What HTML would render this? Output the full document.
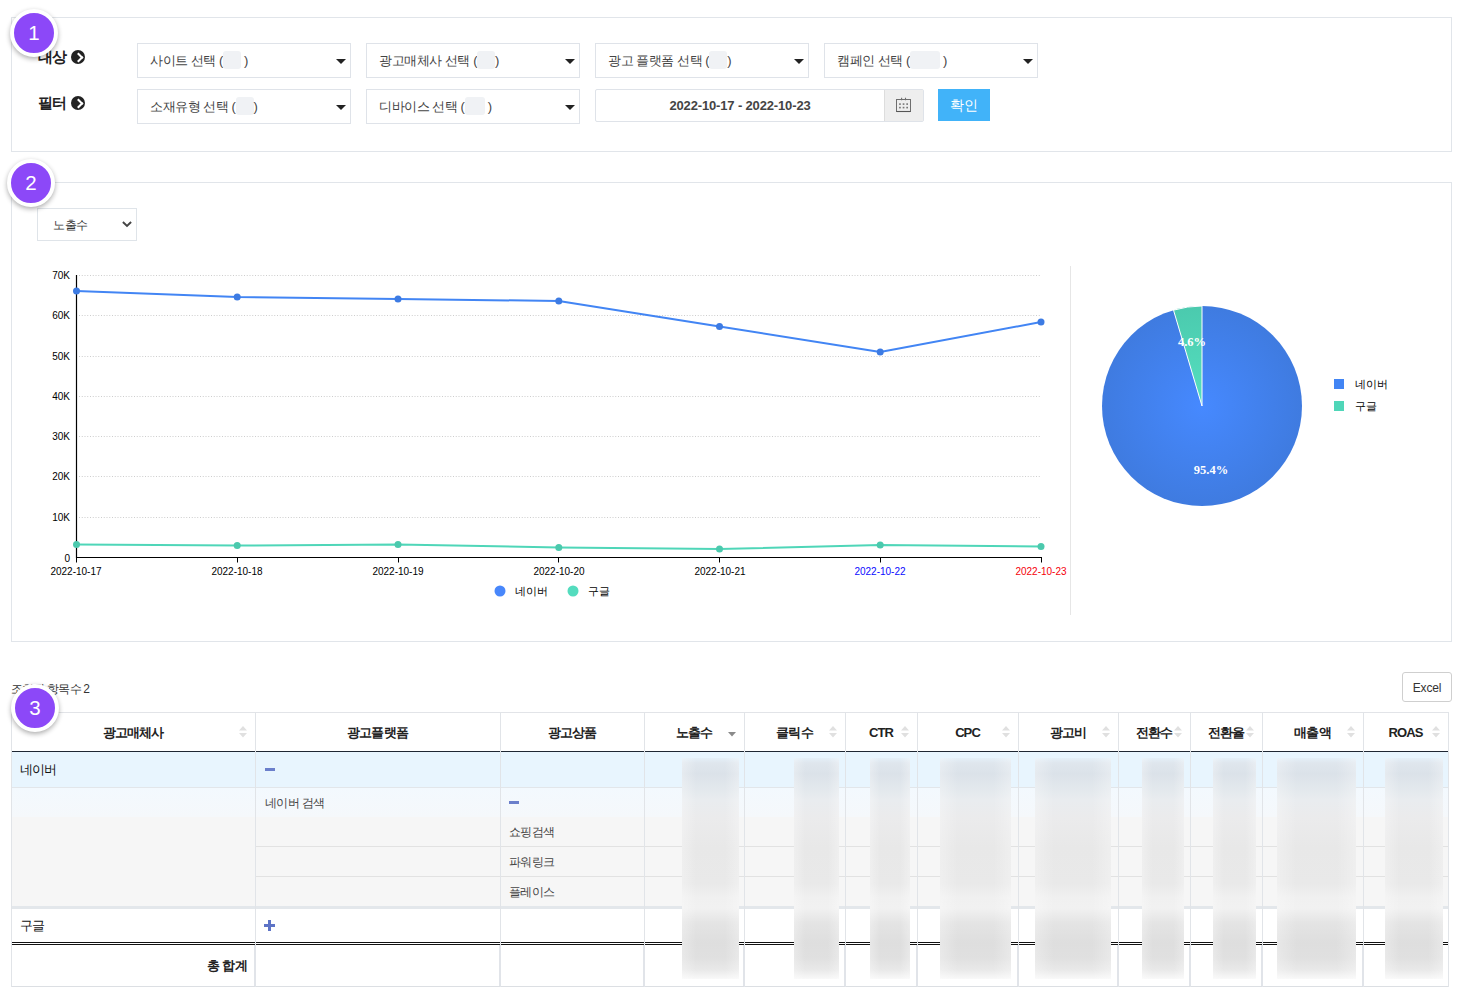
<!DOCTYPE html>
<html>
<head>
<meta charset="utf-8">
<title>광고 리포트</title>
<style>
*{box-sizing:border-box;margin:0;padding:0}
html,body{width:1459px;height:1000px;overflow:hidden;background:#fff}
body{position:relative;font-family:"Liberation Sans",sans-serif;color:#333;font-size:13px}
.abs{position:absolute}
.panel{position:absolute;left:11px;width:1441px;border:1px solid #e1e5ea;background:#fff}
.badge{position:absolute;width:48px;height:48px;border-radius:50%;background:#8c48f8;border:4px solid #fff;box-shadow:0 2px 5px rgba(0,0,0,.32);color:#fff;font-size:20.5px;line-height:40px;text-align:center;z-index:20}
.lbl{position:absolute;left:38px;font-weight:bold;font-size:15px;color:#222;line-height:18px;white-space:nowrap}
.lbl{letter-spacing:-.8px}
.lbl i{position:absolute;left:33px;top:2px;width:14px;height:14px;border-radius:50%;background:#222}
.lbl i:after{content:"";position:absolute;left:3.5px;top:3.7px;width:5px;height:5px;border-top:2px solid #fff;border-right:2px solid #fff;transform:rotate(45deg)}
.sel{position:absolute;width:214px;height:35px;border:1px solid #dfe3e9;background:#fff;font-size:13px;line-height:33px;padding-left:12px;color:#444;white-space:nowrap;letter-spacing:-.45px}
.sel:after{content:"";position:absolute;right:4px;top:15px;border-left:5px solid transparent;border-right:5px solid transparent;border-top:5px solid #222}
.sel b{display:inline-block;height:18px;vertical-align:-4px;background:#f0f2f5;border-radius:3px;font-weight:normal}
/*TBLCSS_S*/
.th{position:absolute;top:724px;height:18px;line-height:18px;font-weight:bold;font-size:13px;color:#222;text-align:center;white-space:nowrap;letter-spacing:-.9px}
.td{position:absolute;font-size:12px;line-height:18px;color:#444;white-space:nowrap;letter-spacing:-.6px}
.blob{position:absolute;top:758px;height:221px;overflow:hidden;background:
linear-gradient(to right,rgba(255,255,255,.3),rgba(255,255,255,0) 25%,rgba(255,255,255,0) 75%,rgba(255,255,255,.3)),
linear-gradient(to bottom,rgba(226,236,245,.6) 0,#dfe6ed 5px,#dbe2e9 16px,#e1e7ec 28px,#e9ecef 42px,#ebebec 60px,#e8e8e8 90px,#e9e9e9 125px,#f0f0f0 140px,#f1f1f1 150px,#e4e4e4 165px,#dedede 185px,#e0e0e0 200px,#e9e9e9 212px,rgba(245,245,245,.6) 221px)}
/*TBLCSS_E*/
</style>
</head>
<body>

<!-- ============ 1. filter panel ============ -->
<div class="panel" style="top:17px;height:135px"></div>
<div class="badge" style="left:10px;top:9px">1</div>

<div class="lbl" style="top:48px">대상<i></i></div>
<div class="lbl" style="top:94px">필터<i></i></div>

<div class="sel" style="left:137px;top:43px">사이트 선택 (<b style="width:18px"></b> )</div>
<div class="sel" style="left:366px;top:43px">광고매체사 선택 (<b style="width:18px"></b>)</div>
<div class="sel" style="left:595px;top:43px">광고 플랫폼 선택 (<b style="width:18px"></b>)</div>
<div class="sel" style="left:824px;top:43px">캠페인 선택 (<b style="width:30px"></b> )</div>
<div class="sel" style="left:137px;top:89px">소재유형 선택 (<b style="width:18px"></b>)</div>
<div class="sel" style="left:366px;top:89px">디바이스 선택 (<b style="width:20px"></b> )</div>

<div class="abs" style="left:595px;top:89px;width:329px;height:33px;border:1px solid #dfe3e9;border-radius:2px;background:#fff"></div>
<div class="abs" style="left:595px;top:89px;width:290px;height:33px;line-height:33px;text-align:center;font-weight:bold;font-size:13px;color:#444;letter-spacing:-0.15px">2022-10-17 - 2022-10-23</div>
<div class="abs" style="left:884px;top:90px;width:39px;height:31px;background:#eee;border-left:1px solid #ddd"></div>
<svg class="abs" style="left:895px;top:96px" width="17" height="17" viewBox="0 0 17 17" fill="none" stroke="#6e6e6e" stroke-width="1"><rect x="1.5" y="3.5" width="14" height="12"/><path d="M1.5 15.5h14" stroke="#555" stroke-width="1.1"/><path d="M6.6 1.8v2.4M10.5 1.8v2.4" stroke-width="1.1"/><g fill="#777" stroke="none"><rect x="4.1" y="7.3" width="1.7" height="1.6"/><rect x="7.7" y="7.3" width="1.7" height="1.6"/><rect x="11.3" y="7.3" width="1.7" height="1.6"/><rect x="4.1" y="10.8" width="1.7" height="1.6"/><rect x="7.7" y="10.8" width="1.7" height="1.6"/><rect x="11.3" y="10.8" width="1.7" height="1.6"/></g></svg>
<div class="abs" style="left:938px;top:89px;width:52px;height:32px;background:#41b3f9;color:#fff;font-size:14px;line-height:32px;text-align:center">확인</div>

<!-- ============ 2. chart panel ============ -->
<div class="panel" style="top:182px;height:460px"></div>
<div class="badge" style="left:7px;top:159px">2</div>

<!--CHART_S-->
<div class="abs" style="left:37px;top:208px;width:100px;height:33px;border:1px solid #dfe4e9;background:#fff;font-size:12px;line-height:33px;padding-left:15px;color:#333;letter-spacing:-.4px">노출수</div>
<svg class="abs" style="left:121px;top:220px" width="12" height="9" viewBox="0 0 12 9" fill="none" stroke="#444" stroke-width="1.9"><path d="M1.9 2 6 6l4.1-4"/></svg>
<svg class="abs" style="left:0;top:0" width="1459" height="1000" viewBox="0 0 1459 1000" font-family="Liberation Sans, sans-serif">
<line x1="79" x2="1041" y1="275.5" y2="275.5" stroke="#cdcdcd" stroke-width="1" stroke-dasharray="1 1.75"/>
<line x1="79" x2="1041" y1="315.5" y2="315.5" stroke="#cdcdcd" stroke-width="1" stroke-dasharray="1 1.75"/>
<line x1="79" x2="1041" y1="356.5" y2="356.5" stroke="#cdcdcd" stroke-width="1" stroke-dasharray="1 1.75"/>
<line x1="79" x2="1041" y1="396.5" y2="396.5" stroke="#cdcdcd" stroke-width="1" stroke-dasharray="1 1.75"/>
<line x1="79" x2="1041" y1="436.5" y2="436.5" stroke="#cdcdcd" stroke-width="1" stroke-dasharray="1 1.75"/>
<line x1="79" x2="1041" y1="476.5" y2="476.5" stroke="#cdcdcd" stroke-width="1" stroke-dasharray="1 1.75"/>
<line x1="79" x2="1041" y1="517.5" y2="517.5" stroke="#cdcdcd" stroke-width="1" stroke-dasharray="1 1.75"/>
<path d="M76.5 275V557.5H1041.5" fill="none" stroke="#000" stroke-width="1.2"/>
<line x1="76.5" x2="76.5" y1="557" y2="562.5" stroke="#000" stroke-width="1"/>
<line x1="237.5" x2="237.5" y1="557" y2="562.5" stroke="#000" stroke-width="1"/>
<line x1="398.5" x2="398.5" y1="557" y2="562.5" stroke="#000" stroke-width="1"/>
<line x1="558.5" x2="558.5" y1="557" y2="562.5" stroke="#000" stroke-width="1"/>
<line x1="719.5" x2="719.5" y1="557" y2="562.5" stroke="#000" stroke-width="1"/>
<line x1="880.5" x2="880.5" y1="557" y2="562.5" stroke="#000" stroke-width="1"/>
<line x1="1041.5" x2="1041.5" y1="557" y2="562.5" stroke="#000" stroke-width="1"/>
<text x="70" y="279" text-anchor="end" font-size="10" fill="#000">70K</text>
<text x="70" y="319" text-anchor="end" font-size="10" fill="#000">60K</text>
<text x="70" y="360" text-anchor="end" font-size="10" fill="#000">50K</text>
<text x="70" y="400" text-anchor="end" font-size="10" fill="#000">40K</text>
<text x="70" y="440" text-anchor="end" font-size="10" fill="#000">30K</text>
<text x="70" y="480" text-anchor="end" font-size="10" fill="#000">20K</text>
<text x="70" y="521" text-anchor="end" font-size="10" fill="#000">10K</text>
<text x="70" y="562" text-anchor="end" font-size="10" fill="#000">0</text>
<text x="76" y="575.2" text-anchor="middle" font-size="10" fill="#000">2022-10-17</text>
<text x="237" y="575.2" text-anchor="middle" font-size="10" fill="#000">2022-10-18</text>
<text x="398" y="575.2" text-anchor="middle" font-size="10" fill="#000">2022-10-19</text>
<text x="559" y="575.2" text-anchor="middle" font-size="10" fill="#000">2022-10-20</text>
<text x="720" y="575.2" text-anchor="middle" font-size="10" fill="#000">2022-10-21</text>
<text x="880" y="575.2" text-anchor="middle" font-size="10" fill="#0a0aff">2022-10-22</text>
<text x="1041" y="575.2" text-anchor="middle" font-size="10" fill="#f5000a">2022-10-23</text>
<polyline points="76.5,544.5 237.2,545.5 398.0,544.5 558.8,547.5 719.5,549 880.2,545 1041.0,546.5" fill="none" stroke="#4fd6b8" stroke-width="2" stroke-linejoin="round"/>
<circle cx="76.5" cy="544.5" r="3.5" fill="#4bc9ad"/>
<circle cx="237.2" cy="545.5" r="3.5" fill="#4bc9ad"/>
<circle cx="398.0" cy="544.5" r="3.5" fill="#4bc9ad"/>
<circle cx="558.8" cy="547.5" r="3.5" fill="#4bc9ad"/>
<circle cx="719.5" cy="549" r="3.5" fill="#4bc9ad"/>
<circle cx="880.2" cy="545" r="3.5" fill="#4bc9ad"/>
<circle cx="1041.0" cy="546.5" r="3.5" fill="#4bc9ad"/>
<polyline points="76.5,291 237.2,297 398.0,299 558.8,301 719.5,326.5 880.2,352 1041.0,322" fill="none" stroke="#4285f4" stroke-width="2" stroke-linejoin="round"/>
<circle cx="76.5" cy="291" r="3.5" fill="#3d7be3"/>
<circle cx="237.2" cy="297" r="3.5" fill="#3d7be3"/>
<circle cx="398.0" cy="299" r="3.5" fill="#3d7be3"/>
<circle cx="558.8" cy="301" r="3.5" fill="#3d7be3"/>
<circle cx="719.5" cy="326.5" r="3.5" fill="#3d7be3"/>
<circle cx="880.2" cy="352" r="3.5" fill="#3d7be3"/>
<circle cx="1041.0" cy="322" r="3.5" fill="#3d7be3"/>
<circle cx="500" cy="591" r="5.5" fill="#4887fb"/><text x="515" y="595" font-size="11" fill="#000">네이버</text>
<circle cx="573" cy="591" r="5.5" fill="#54dcbe"/><text x="588" y="595" font-size="11" fill="#000">구글</text>
<line x1="1070.5" x2="1070.5" y1="266" y2="615" stroke="#e6e6e6" stroke-width="1"/>
<defs><radialGradient id="pg" cx="1202" cy="406" r="100" gradientUnits="userSpaceOnUse"><stop offset="0" stop-color="#4689ff"/><stop offset="1" stop-color="#3f7be0"/></radialGradient><radialGradient id="gg" cx="1202" cy="406" r="100" gradientUnits="userSpaceOnUse"><stop offset="0" stop-color="#55e0c0"/><stop offset="1" stop-color="#4bcaae"/></radialGradient></defs>
<circle cx="1202" cy="406" r="100" fill="url(#pg)"/>
<path d="M1202 406L1173.50 310.15A100 100 0 0 1 1202 306Z" fill="url(#gg)" stroke="#fff" stroke-width="1" stroke-linejoin="round"/>
<text x="1192" y="346" text-anchor="middle" font-family="Liberation Serif, serif" font-weight="bold" font-size="12.5" fill="#fff">4.6%</text>
<text x="1211" y="474" text-anchor="middle" font-family="Liberation Serif, serif" font-weight="bold" font-size="12.5" fill="#fff">95.4%</text>
<rect x="1334" y="379" width="10" height="10" fill="#4285f4"/><text x="1355" y="388" font-size="11" fill="#000">네이버</text>
<rect x="1334" y="401" width="10" height="10" fill="#4fd6b8"/><text x="1355" y="410" font-size="11" fill="#000">구글</text>
</svg>
<!--CHART_E-->

<!-- ============ 3. table ============ -->
<!--TABLE_S-->
<div class="abs" style="left:11px;top:682px;font-size:12px;line-height:14px;color:#333;letter-spacing:-0.8px">조회된 항목수 2</div>
<div class="abs" style="left:1402px;top:672px;width:50px;height:30px;border:1px solid #cfcfcf;border-radius:3px;background:#fff;font-size:12px;line-height:30px;text-align:center;color:#333;letter-spacing:-.2px">Excel</div>
<div class="badge" style="left:11px;top:684px">3</div>
<div class="abs" style="left:11px;top:712px;width:1438px;height:39px;border-top:1px solid #e2e4e8;background:#fff"></div>
<div class="abs" style="left:11px;top:751px;width:1438px;height:1px;background:#1f2733"></div>
<div class="abs" style="left:11px;top:752px;width:1438px;height:35px;background:#e8f5fe"></div>
<div class="abs" style="left:11px;top:787px;width:1438px;height:30px;background:linear-gradient(#f3f9fe,#f5f8fb);border-top:1px solid #e2e6ea"></div>
<div class="abs" style="left:11px;top:817px;width:1438px;height:90px;background:#f6f6f6"></div>
<div class="abs" style="left:256px;top:846px;width:1193px;height:1px;background:#e2e2e2"></div>
<div class="abs" style="left:256px;top:876px;width:1193px;height:1px;background:#e2e2e2"></div>
<div class="abs" style="left:11px;top:906px;width:1438px;height:3px;background:#e3e7eb"></div>
<div class="abs" style="left:11px;top:942px;width:1438px;height:1px;background:#111"></div>
<div class="abs" style="left:11px;top:944px;width:1438px;height:1px;background:#111"></div>
<div class="abs" style="left:11px;top:986px;width:1438px;height:1px;background:#dcdfe3"></div>
<div class="abs" style="left:11px;top:712px;width:1px;height:275px;background:#e1e4e8"></div>
<div class="abs" style="left:255px;top:712px;width:1px;height:275px;background:#e1e4e8"></div>
<div class="abs" style="left:500px;top:712px;width:1px;height:275px;background:#e1e4e8"></div>
<div class="abs" style="left:644px;top:712px;width:1px;height:275px;background:#e1e4e8"></div>
<div class="abs" style="left:744px;top:712px;width:1px;height:275px;background:#e1e4e8"></div>
<div class="abs" style="left:845px;top:712px;width:1px;height:275px;background:#e1e4e8"></div>
<div class="abs" style="left:917px;top:712px;width:1px;height:275px;background:#e1e4e8"></div>
<div class="abs" style="left:1018px;top:712px;width:1px;height:275px;background:#e1e4e8"></div>
<div class="abs" style="left:1118px;top:712px;width:1px;height:275px;background:#e1e4e8"></div>
<div class="abs" style="left:1190px;top:712px;width:1px;height:275px;background:#e1e4e8"></div>
<div class="abs" style="left:1262px;top:712px;width:1px;height:275px;background:#e1e4e8"></div>
<div class="abs" style="left:1363px;top:712px;width:1px;height:275px;background:#e1e4e8"></div>
<div class="abs" style="left:1448px;top:712px;width:1px;height:275px;background:#e1e4e8"></div>
<div class="abs" style="left:254px;top:945px;width:2px;height:41px;background:#e1e4e9"></div>
<div class="abs" style="left:499px;top:945px;width:2px;height:41px;background:#e1e4e9"></div>
<div class="abs" style="left:643px;top:945px;width:2px;height:41px;background:#e1e4e9"></div>
<div class="abs" style="left:743px;top:945px;width:2px;height:41px;background:#e1e4e9"></div>
<div class="abs" style="left:844px;top:945px;width:2px;height:41px;background:#e1e4e9"></div>
<div class="abs" style="left:916px;top:945px;width:2px;height:41px;background:#e1e4e9"></div>
<div class="abs" style="left:1017px;top:945px;width:2px;height:41px;background:#e1e4e9"></div>
<div class="abs" style="left:1117px;top:945px;width:2px;height:41px;background:#e1e4e9"></div>
<div class="abs" style="left:1189px;top:945px;width:2px;height:41px;background:#e1e4e9"></div>
<div class="abs" style="left:1261px;top:945px;width:2px;height:41px;background:#e1e4e9"></div>
<div class="abs" style="left:1362px;top:945px;width:2px;height:41px;background:#e1e4e9"></div>
<div class="th" style="left:11px;width:244px">광고매체사</div>
<svg class="abs" style="left:239px;top:726px" width="8" height="12"><path d="M0 4.5h8L4 0zM0 7h8L4 11.5z" fill="#e0e0e0"/></svg>
<div class="th" style="left:255px;width:245px">광고플랫폼</div>
<div class="th" style="left:500px;width:144px">광고상품</div>
<div class="th" style="left:644px;width:100px">노출수</div>
<svg class="abs" style="left:728px;top:732px" width="8" height="5"><path d="M0 0h8L4 4.5z" fill="#8a8a8a"/></svg>
<div class="th" style="left:744px;width:101px">클릭수</div>
<svg class="abs" style="left:829px;top:726px" width="8" height="12"><path d="M0 4.5h8L4 0zM0 7h8L4 11.5z" fill="#e0e0e0"/></svg>
<div class="th" style="left:845px;width:72px">CTR</div>
<svg class="abs" style="left:901px;top:726px" width="8" height="12"><path d="M0 4.5h8L4 0zM0 7h8L4 11.5z" fill="#e0e0e0"/></svg>
<div class="th" style="left:917px;width:101px">CPC</div>
<svg class="abs" style="left:1002px;top:726px" width="8" height="12"><path d="M0 4.5h8L4 0zM0 7h8L4 11.5z" fill="#e0e0e0"/></svg>
<div class="th" style="left:1018px;width:100px">광고비</div>
<svg class="abs" style="left:1102px;top:726px" width="8" height="12"><path d="M0 4.5h8L4 0zM0 7h8L4 11.5z" fill="#e0e0e0"/></svg>
<div class="th" style="left:1118px;width:72px">전환수</div>
<svg class="abs" style="left:1174px;top:726px" width="8" height="12"><path d="M0 4.5h8L4 0zM0 7h8L4 11.5z" fill="#e0e0e0"/></svg>
<div class="th" style="left:1190px;width:72px">전환율</div>
<svg class="abs" style="left:1246px;top:726px" width="8" height="12"><path d="M0 4.5h8L4 0zM0 7h8L4 11.5z" fill="#e0e0e0"/></svg>
<div class="th" style="left:1262px;width:101px">매출액</div>
<svg class="abs" style="left:1347px;top:726px" width="8" height="12"><path d="M0 4.5h8L4 0zM0 7h8L4 11.5z" fill="#e0e0e0"/></svg>
<div class="th" style="left:1363px;width:85px">ROAS</div>
<svg class="abs" style="left:1432px;top:726px" width="8" height="12"><path d="M0 4.5h8L4 0zM0 7h8L4 11.5z" fill="#e0e0e0"/></svg>
<div class="td" style="left:20px;top:761px;color:#111;font-size:12.5px;letter-spacing:-1px">네이버</div>
<div class="abs" style="left:265px;top:768px;width:10px;height:3px;background:#6b7fcb"></div>
<div class="td" style="left:265px;top:794px">네이버 검색</div>
<div class="abs" style="left:509px;top:801px;width:10px;height:3px;background:#6b7fcb"></div>
<div class="td" style="left:509px;top:823px">쇼핑검색</div>
<div class="td" style="left:509px;top:853px">파워링크</div>
<div class="td" style="left:509px;top:883px">플레이스</div>
<div class="td" style="left:20px;top:917px;color:#111;font-size:12.5px;letter-spacing:-1px">구글</div>
<div class="abs" style="left:264px;top:924px;width:11px;height:3px;background:#5d73c6"></div><div class="abs" style="left:268px;top:920px;width:3px;height:11px;background:#5d73c6"></div>
<div class="td" style="left:150px;top:957px;width:97px;text-align:right;font-weight:bold;color:#222;font-size:13px">총 합계</div>
<div class="blob" style="left:682px;width:57px"></div>
<div class="blob" style="left:794px;width:45px"></div>
<div class="blob" style="left:870px;width:40px"></div>
<div class="blob" style="left:940px;width:71px"></div>
<div class="blob" style="left:1035px;width:76px"></div>
<div class="blob" style="left:1142px;width:42px"></div>
<div class="blob" style="left:1213px;width:43px"></div>
<div class="blob" style="left:1277px;width:79px"></div>
<div class="blob" style="left:1385px;width:58px"></div>
<!--TABLE_E-->

</body>
</html>
